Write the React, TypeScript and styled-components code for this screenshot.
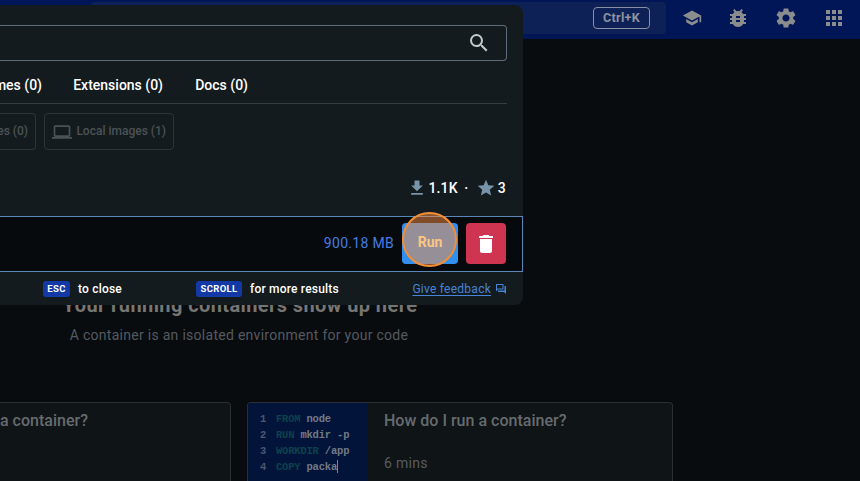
import React from 'react';
import styled, { createGlobalStyle } from 'styled-components';
import { MdSearch, MdSchool, MdBugReport, MdSettings, MdApps, MdDelete, MdDownload, MdStar, MdOutlineComputer, MdOutlineQuestionAnswer } from 'react-icons/md';

const GlobalStyle = createGlobalStyle`
  * { box-sizing: border-box; }
  html, body { margin: 0; height: 100%; overflow: hidden; background: #080c0f; }
  body { font-family: Roboto, "Liberation Sans", sans-serif; font-size: 14px; }
  svg { display: block; flex: none; }
`;

const Page = styled.div`
  position: relative;
  width: 860px;
  height: 481px;
  overflow: hidden;
  display: flex;
  flex-direction: column;
  background: #080c0f;
`;

const TopBar = styled.header`
  flex: none;
  height: 39px;
  padding: 2px 14px 5px 91px;
  display: flex;
  align-items: center;
  background: #001657;
  color: #8b8c8d;
`;

const GlobalSearch = styled.div`
  width: 575px;
  height: 32px;
  padding-right: 16px;
  display: flex;
  align-items: center;
  justify-content: flex-end;
  border-radius: 4px;
  background: #0d2157;
`;

const Shortcut = styled.kbd`
  width: 57px;
  height: 22px;
  border: 1px solid #8790a5;
  border-radius: 4px;
  font: 700 12.5px/20px Roboto, sans-serif;
  letter-spacing: 0.3px;
  text-align: center;
  color: #8d939f;
`;

const TopIcons = styled.nav`
  flex: 1;
  padding-left: 14px;
  display: grid;
  grid-template-columns: 46px 48px 48px 24px;
  align-items: center;
`;

const IconSlot = styled.span<{ $size: number }>`
  display: flex;
  justify-content: center;
  width: 24px;
  svg { width: ${p => p.$size}px; height: ${p => p.$size}px; }
`;

const Main = styled.main`
  flex: 1;
  display: flex;
  flex-direction: column;
`;

const EmptyState = styled.section`
  width: 478px;
  height: 363px;
  padding-top: 252px;
  flex: none;
  text-align: center;
`;

const EmptyTitle = styled.h1`
  margin: 0 0 0 2px;
  font-size: 20px;
  line-height: 28px;
  font-weight: 700;
  letter-spacing: 0.4px;
  color: #777573;
`;

const EmptyText = styled.p`
  margin: 6px 0 0;
  font-size: 14px;
  line-height: 20px;
  letter-spacing: 0.28px;
  color: #555a60;
`;

const Guides = styled.section`
  flex: none;
  display: flex;
  gap: 16px;
  width: 673px;
  height: 90px;
`;

const GuideCard = styled.article<{ $width: number; $cut?: boolean }>`
  width: ${p => p.$width}px;
  display: flex;
  overflow: hidden;
  border: 1px solid #282f34;
  border-bottom: 0;
  border-left-width: ${p => (p.$cut ? 0 : 1)}px;
  border-radius: ${p => (p.$cut ? '0 4px 0 0' : '4px 4px 0 0')};
  background: #0f1416;
`;

const GuideBody = styled.div<{ $inset: number }>`
  padding: 7px 0 0 ${p => p.$inset}px;
  color: #666b70;
`;

const GuideTitle = styled.h2`
  margin: 0;
  font-size: 16px;
  line-height: 22px;
  font-weight: 500;
  letter-spacing: 0.01px;
  white-space: nowrap;
`;

const GuideTime = styled.div`
  margin-top: 21px;
  font-size: 14px;
  line-height: 20px;
  letter-spacing: 0.3px;
  color: #575c60;
`;

const Code = styled.div`
  width: 120px;
  padding: 8px 0 0 12px;
  background: #03143a;
  font: 700 10.5px/16px "Liberation Mono", monospace;
  letter-spacing: -0.2px;
  color: #717a87;
`;

const CodeLine = styled.div`
  display: grid;
  grid-template-columns: 16px auto;
  white-space: pre;
`;

const LineNo = styled.span`
  color: #4a5770;
`;

const Keyword = styled.span`
  color: #0b424c;
`;

const Caret = styled.span`
  display: inline-block;
  width: 1px;
  height: 13px;
  margin-top: -2px;
  vertical-align: -3px;
  background: #7b8592;
`;

const Dialog = styled.div`
  position: absolute;
  left: 0;
  top: 5px;
  width: 523px;
  height: 300px;
  padding-top: 20px;
  display: flex;
  flex-direction: column;
  border-radius: 0 8px 8px 0;
  background: #141b1e;
  color: #fff;
`;

const SearchField = styled.div`
  flex: none;
  width: 507px;
  height: 36px;
  padding-right: 15px;
  display: flex;
  align-items: center;
  justify-content: flex-end;
  border: 1px solid #5c6c7a;
  border-left: 0;
  border-radius: 0 4px 4px 0;
  color: #c4c9cc;
`;

const Tabs = styled.div`
  flex: none;
  width: 507px;
  height: 43px;
  padding-top: 6px;
  display: flex;
  align-items: center;
  gap: 32px;
  border-bottom: 1px solid #343e44;
`;

const Tab = styled.span<{ $width: number }>`
  width: ${p => p.$width}px;
  display: flex;
  justify-content: flex-end;
  font-weight: 500;
  line-height: 20px;
  white-space: nowrap;
`;

const Chips = styled.div`
  flex: none;
  margin-top: 9px;
  display: flex;
  gap: 8px;
`;

const Chip = styled.span<{ $width: number; $cut?: boolean }>`
  width: ${p => p.$width}px;
  height: 37px;
  padding: 0 7px 2px;
  display: flex;
  align-items: center;
  justify-content: ${p => (p.$cut ? 'flex-end' : 'space-between')};
  border: 1px solid #2c3438;
  border-left-width: ${p => (p.$cut ? 0 : 1)}px;
  border-radius: ${p => (p.$cut ? '0 4px 4px 0' : '4px')};
  font-size: 12px;
  font-weight: 500;
  white-space: nowrap;
  color: #4b5256;
  svg { margin-top: 2px; }
`;

const Stats = styled.div`
  flex: none;
  width: 506px;
  height: 66px;
  padding-top: 9px;
  display: flex;
  align-items: center;
  justify-content: flex-end;
  font-weight: 500;
  letter-spacing: 0.2px;
  svg { color: #7794ab; }
`;

const Downloads = styled.span`
  margin-left: 1px;
`;

const Dot = styled.span`
  width: 17px;
  margin-right: 1px;
  text-align: center;
`;

const Stars = styled.span`
  margin-left: 2px;
`;

const ResultRow = styled.div`
  flex: none;
  height: 56px;
  padding: 0 16px 1px 0;
  display: flex;
  align-items: center;
  justify-content: flex-end;
  gap: 8px;
  border: 1px solid #5b87b8;
  border-left: 0;
  background: #060a0d;
`;

const Size = styled.span`
  padding-bottom: 2px;
  color: #447de2;
  letter-spacing: 0.3px;
`;

const Action = styled.button<{ $danger?: boolean }>`
  position: relative;
  width: ${p => (p.$danger ? 40 : 56)}px;
  height: 41px;
  padding: 0;
  border: 0;
  border-radius: 4px;
  display: flex;
  align-items: center;
  justify-content: center;
  background: ${p => (p.$danger ? '#cf3450' : '#3190ef')};
  color: #fff;
  font: 700 14px/20px Roboto, sans-serif;
`;

const RunLabel = styled.span`
  z-index: 2;
  padding-bottom: 3px;
  color: #fbc584;
`;

const ClickMarker = styled.span`
  position: absolute;
  left: 0;
  top: -11px;
  width: 55px;
  height: 55px;
  border: 2px solid #f48e35;
  border-radius: 50%;
  background: rgba(249, 144, 69, 0.51);
`;

const Footer = styled.footer`
  flex: 1;
  width: 507px;
  padding-left: 43px;
  display: flex;
  align-items: center;
  font-size: 12px;
  font-weight: 500;
  white-space: nowrap;
`;

const Key = styled.kbd<{ $width: number }>`
  width: ${p => p.$width}px;
  height: 16px;
  border-radius: 3px;
  background: #1239a5;
  font: 700 9.5px/16px Roboto, sans-serif;
  letter-spacing: 0.3px;
  text-align: center;
`;

const Hint = styled.span<{ $width: number }>`
  width: ${p => p.$width}px;
  padding-left: 8px;
  letter-spacing: 0.2px;
`;

const Feedback = styled.a`
  margin-left: auto;
  display: flex;
  align-items: center;
  gap: 4px;
  color: #4784d7;
  font-weight: 400;
  span { text-decoration: underline; text-underline-offset: 2px; letter-spacing: 0.25px; }
`;

const lines = [
  ['FROM', 'node'],
  ['RUN', 'mkdir -p'],
  ['WORKDIR', '/app'],
  ['COPY', 'packa'],
];

export default function App() {
  return (
    <Page>
      <GlobalStyle />
      <TopBar>
        <GlobalSearch><Shortcut>Ctrl+K</Shortcut></GlobalSearch>
        <TopIcons>
          <IconSlot $size={20}><MdSchool /></IconSlot>
          <IconSlot $size={24}><MdBugReport /></IconSlot>
          <IconSlot $size={24}><MdSettings /></IconSlot>
          <IconSlot $size={24}><MdApps /></IconSlot>
        </TopIcons>
      </TopBar>
      <Main>
        <EmptyState>
          <EmptyTitle>Your running containers show up here</EmptyTitle>
          <EmptyText>A container is an isolated environment for your code</EmptyText>
        </EmptyState>
        <Guides>
          <GuideCard $width={231} $cut>
            <GuideBody $inset={0}><GuideTitle>a container?</GuideTitle></GuideBody>
          </GuideCard>
          <GuideCard $width={426}>
            <Code>
              {lines.map(([word, rest], i) => (
                <CodeLine key={word}>
                  <LineNo>{i + 1}</LineNo>
                  <span><Keyword>{word}</Keyword> {rest}{i === 3 && <Caret />}</span>
                </CodeLine>
              ))}
            </Code>
            <GuideBody $inset={16}>
              <GuideTitle>How do I run a container?</GuideTitle>
              <GuideTime>6 mins</GuideTime>
            </GuideBody>
          </GuideCard>
        </Guides>
      </Main>
      <Dialog>
        <SearchField><MdSearch size={24} /></SearchField>
        <Tabs>
          <Tab $width={42}>mes (0)</Tab>
          <Tab $width={89}>Extensions (0)</Tab>
          <Tab $width={53}>Docs (0)</Tab>
        </Tabs>
        <Chips>
          <Chip $width={36} $cut>es (0)</Chip>
          <Chip $width={130}><MdOutlineComputer size={20} /><span>Local images (1)</span></Chip>
        </Chips>
        <Stats>
          <MdDownload size={20} />
          <Downloads>1.1K</Downloads>
          <Dot>·</Dot>
          <MdStar size={20} />
          <Stars>3</Stars>
        </Stats>
        <ResultRow>
          <Size>900.18 MB</Size>
          <Action><ClickMarker /><RunLabel>Run</RunLabel></Action>
          <Action $danger><MdDelete size={24} /></Action>
        </ResultRow>
        <Footer>
          <Key $width={27}>ESC</Key>
          <Hint $width={126}>to close</Hint>
          <Key $width={46}>SCROLL</Key>
          <Hint $width={110}>for more results</Hint>
          <Feedback><span>Give feedback</span><MdOutlineQuestionAnswer size={12} /></Feedback>
        </Footer>
      </Dialog>
    </Page>
  );
}
